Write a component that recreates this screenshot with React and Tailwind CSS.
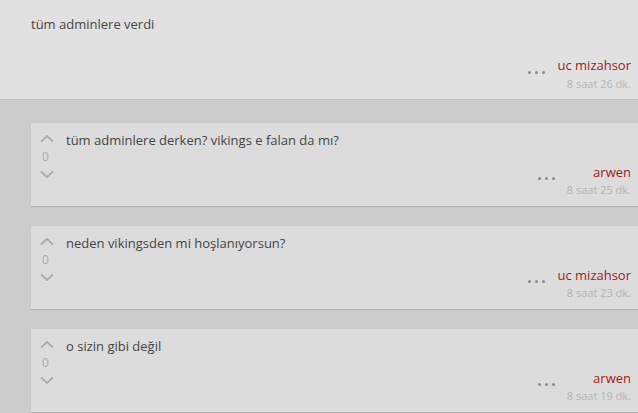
import React from "react";

const Up = () => (
  <svg width="14" height="9" viewBox="0 0 14 9" fill="none" stroke="#ababab" strokeWidth="1.8" strokeLinecap="round" strokeLinejoin="round">
    <path d="M1.5 7.2 L7 2 L12.5 7.2" />
  </svg>
);
const Down = () => (
  <svg width="14" height="9" viewBox="0 0 14 9" fill="none" stroke="#ababab" strokeWidth="1.8" strokeLinecap="round" strokeLinejoin="round">
    <path d="M1.5 1.8 L7 7 L12.5 1.8" />
  </svg>
);

const Dots = () => (
  <div className="flex gap-[4px] mr-[12px] mt-[-6px]">
    <span className="w-[3px] h-[3px] rounded-full bg-[#8a8a8a]" />
    <span className="w-[3px] h-[3px] rounded-full bg-[#8a8a8a]" />
    <span className="w-[3px] h-[3px] rounded-full bg-[#8a8a8a]" />
  </div>
);

const Meta = ({ name, time, tall }) => (
  <div className="flex items-center justify-end pr-[7px]">
    <Dots />
    <div className="flex flex-col items-end">
      <span className="text-[13px] leading-[18px] text-[#9e1b1b]">{name}</span>
      <span className={(tall ? "leading-[20px] " : "leading-[18px] ") + "text-[11px] text-[#b4b4b4]"}>{time}</span>
    </div>
  </div>
);

const Card = ({ text, name, time }) => (
  <div className="ml-[31px] bg-[#dcdcdc] shadow-[0_1px_1px_rgba(0,0,0,0.12)] h-[83px] flex">
    <div className="w-[35px] pr-[4px] flex flex-col items-center pt-[11px]">
      <Up />
      <span className="text-[12px] leading-[14px] text-[#ababab] mt-[7px] ml-[-2px]">0</span>
      <span className="mt-[6px] flex"><Down /></span>
    </div>
    <div className="flex-1 flex flex-col">
      <div className="text-[13px] leading-[18px] text-[#454545] pt-[8px]">{text}</div>
      <div className="mt-auto pb-[7px]">
        <Meta name={name} time={time} />
      </div>
    </div>
  </div>
);

export default function App() {
  return (
    <div className="w-[638px] h-[413px] overflow-hidden bg-[#cccccc]" style={{ fontFamily: '"Open Sans", "Noto Sans", sans-serif' }}>
      <div className="h-[100px] bg-[#e1e1e1] border-b border-[#c2c2c2] flex flex-col">
        <div className="text-[13px] leading-[18px] text-[#454545] pl-[31px] pt-[15px]">tüm adminlere verdi</div>
        <div className="mt-auto pb-[5px]">
          <Meta name="uc mizahsor" time="8 saat 26 dk." tall />
        </div>
      </div>
      <div className="flex flex-col gap-[20px] pt-[23px]">
        <Card text="tüm adminlere derken? vikings e falan da mı?" name="arwen" time="8 saat 25 dk." />
        <Card text="neden vikingsden mi hoşlanıyorsun?" name="uc mizahsor" time="8 saat 23 dk." />
        <Card text="o sizin gibi değil" name="arwen" time="8 saat 19 dk." />
      </div>
    </div>
  );
}
